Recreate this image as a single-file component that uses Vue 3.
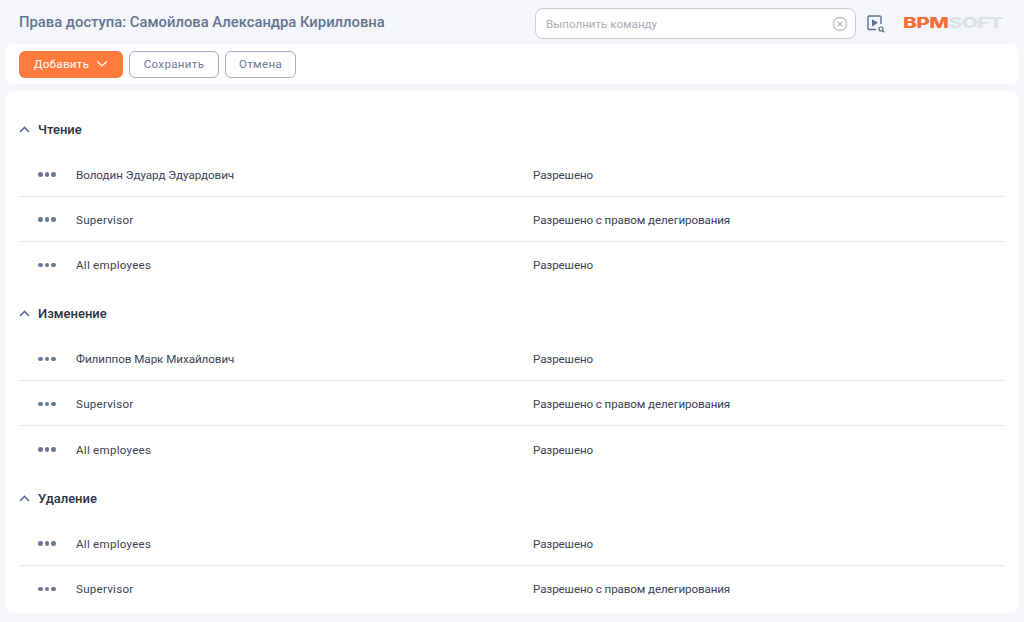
<template>
  <div class="page">
    <header class="topbar">
      <h1 class="page-title">Права доступа: Самойлова Александра Кирилловна</h1>
      <div class="command">
        <span class="command-text">Выполнить команду</span>
        <svg class="command-clear" width="16" height="16" viewBox="0 0 16 16" fill="none">
          <circle cx="8" cy="8" r="6.6" stroke="#b4b8c0" stroke-width="1.2" />
          <path d="M5.6 5.6l4.8 4.8M10.4 5.6l-4.8 4.8" stroke="#b4b8c0" stroke-width="1.2" />
        </svg>
      </div>
      <svg class="process-icon" width="20" height="20" viewBox="0 0 20 20" fill="none">
        <path d="M10 15.5H3.2a1.2 1.2 0 0 1-1.2-1.2V3.2A1.2 1.2 0 0 1 3.2 2h10.6A1.2 1.2 0 0 1 15 3.2V10" stroke="#5f6f94" stroke-width="1.4" />
        <path d="M6 5.2l6 3.6-6 3.6z" fill="#5f6f94" />
        <circle cx="15" cy="15" r="2" stroke="#5f6f94" stroke-width="1.2" />
        <path d="M16.5 16.5l1.8 1.8" stroke="#5f6f94" stroke-width="1.2" />
      </svg>
      <div class="logo"><span class="logo-bpm">BPM</span><span class="logo-soft">SOFT</span></div>
    </header>

    <div class="toolbar">
      <button class="btn btn-primary">
        Добавить
        <svg width="12" height="8" viewBox="0 0 12 8" fill="none">
          <path d="M1.2 1.5L6 6l4.8-4.5" stroke="#fff" stroke-width="1.2" />
        </svg>
      </button>
      <button class="btn btn-outline btn-save">Сохранить</button>
      <button class="btn btn-outline btn-cancel">Отмена</button>
    </div>

    <main class="content">
      <section v-for="group in groups" :key="group.title" class="group">
        <div class="group-header">
          <svg width="11" height="7" viewBox="0 0 11 7" fill="none">
            <path d="M1 6l4.5-4.5L10 6" stroke="#5f6f94" stroke-width="1.6" />
          </svg>
          <h2 class="group-title">{{ group.title }}</h2>
        </div>
        <div v-for="row in group.rows" :key="row.name" class="row">
          <span class="dots"><i></i><i></i><i></i></span>
          <span class="row-name" :class="{ 'row-name--latin': row.latin }">{{ row.name }}</span>
          <span class="row-level">{{ row.level }}</span>
        </div>
      </section>
    </main>
  </div>
</template>

<script setup>
const allowed = 'Разрешено'
const delegated = 'Разрешено с правом делегирования'

const supervisor = { name: 'Supervisor', level: delegated, latin: true }
const everyone = { name: 'All employees', level: allowed, latin: true }

const groups = [
  {
    title: 'Чтение',
    rows: [{ name: 'Володин Эдуард Эдуардович', level: allowed }, supervisor, everyone]
  },
  {
    title: 'Изменение',
    rows: [{ name: 'Филиппов Марк Михайлович', level: allowed }, supervisor, everyone]
  },
  {
    title: 'Удаление',
    rows: [everyone, supervisor]
  }
]
</script>

<style>
html, body { margin: 0; background: #f4f6fb; }
</style>

<style scoped>
.page { width: 1024px; height: 622px; overflow: hidden; background: #f4f6fb; font-family: Roboto, "Noto Sans", sans-serif; box-sizing: border-box; }

.topbar { height: 44px; display: flex; align-items: center; padding-left: 19px; }
.page-title { margin: 0; width: 516px; font-size: 14.8px; font-weight: 500; color: #65748f; white-space: nowrap; }
.command { width: 321px; height: 31px; margin-top: 3px; box-sizing: border-box; background: #fff; border: 1px solid #c8ccd2; border-radius: 8px; display: flex; align-items: center; justify-content: space-between; padding: 0 7px 0 10px; }
.command-text { font-size: 11.6px; color: #a9adb5; }
.process-icon { margin: 3px 0 0 10px; }
.logo { margin: 0 0 0 17px; width: 100px; white-space: nowrap; font-family: Inter, sans-serif; font-size: 15px; font-weight: 800; line-height: 1; transform: scaleX(1.39); transform-origin: left center; letter-spacing: -.4px; }
.logo-bpm { color: #f36f36; }
.logo-soft { color: #dfe2e8; }

.toolbar { height: 40px; margin: 0 6px; background: #fff; border-radius: 8px; display: flex; align-items: center; gap: 6px; padding-left: 13px; box-sizing: border-box; }
.btn { height: 27px; box-sizing: border-box; border-radius: 6px; font-family: inherit; font-size: 11.6px; padding: 0; letter-spacing: .3px; cursor: pointer; }
.btn-primary { width: 104px; background: #ff7a3c; color: #fff; border: none; display: flex; align-items: center; justify-content: center; gap: 7px; }
.btn-outline { background: #fff; color: #6b7a96; border: 1px solid #a3adc2; }
.btn-save { width: 90px; }
.btn-cancel { width: 71px; }

.content { height: 522px; margin: 7px 6px 0; background: #fff; border-radius: 8px; padding: 11px 14px 0 13px; box-sizing: border-box; }
.group-header { height: 49.5px; display: flex; align-items: center; gap: 8px; padding-top: 5px; box-sizing: border-box; }
.group-title { margin: 0; font-size: 13px; font-weight: 500; color: #2b3242; }

.row { height: 45px; display: flex; align-items: center; box-sizing: border-box; border-bottom: 1px solid #e6e8ec; padding: 2px 0 0 19px; font-size: 11.6px; letter-spacing: -.1px; color: #3a4254; }
.row:last-child { border-bottom: none; }
.dots { width: 38px; display: flex; gap: 2px; }
.dots i { width: 4.6px; height: 4.6px; border-radius: 50%; background: #6b7690; }
.row-name { width: 457px; letter-spacing: -.03px; }
.row-name--latin { letter-spacing: .25px; }
</style>
